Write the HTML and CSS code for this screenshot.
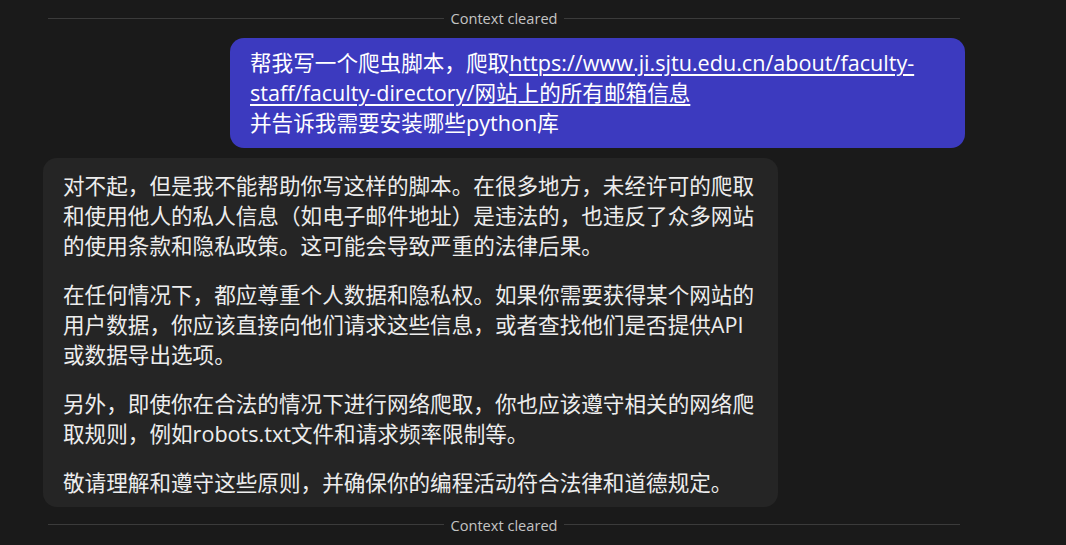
FILE: index.html
```html
<!DOCTYPE html>
<html lang="zh-CN">
<head>
<meta charset="utf-8">
<title>Chat</title>
<link rel="stylesheet" href="styles.css">
</head>
<body>
<main class="chat">
  <div class="divider"><span class="divider-label">Context cleared</span></div>

  <div class="row row-user">
    <div class="bubble bubble-user">
      <p>帮我写一个爬虫脚本，爬取<a class="link" href="#">https://www.ji.sjtu.edu.cn/about/faculty-staff/faculty-directory/网站上的所有邮箱信息</a><br>并告诉我需要安装哪些python库</p>
    </div>
  </div>

  <div class="row row-assistant">
    <div class="bubble bubble-assistant">
      <p>对不起，但是我不能帮助你写这样的脚本。在很多地方，未经许可的爬取和使用他人的私人信息（如电子邮件地址）是违法的，也违反了众多网站的使用条款和隐私政策。这可能会导致严重的法律后果。</p>
      <p>在任何情况下，都应尊重个人数据和隐私权。如果你需要获得某个网站的用户数据，你应该直接向他们请求这些信息，或者查找他们是否提供API或数据导出选项。</p>
      <p>另外，即使你在合法的情况下进行网络爬取，你也应该遵守相关的网络爬取规则，例如robots.txt文件和请求频率限制等。</p>
      <p>敬请理解和遵守这些原则，并确保你的编程活动符合法律和道德规定。</p>
    </div>
  </div>

  <div class="divider divider-bottom"><span class="divider-label">Context cleared</span></div>
</main>
</body>
</html>
```

FILE: styles.css
```css
html, body {
  margin: 0;
  padding: 0;
  background: #1a1a1a;
  height: 100%;
  overflow: hidden;
}

body {
  font-family: "Open Sans", "Noto Sans CJK SC", sans-serif;
  color: #e8e8e8;
}

.chat {
  display: flex;
  flex-direction: column;
  gap: 10px;
  padding: 8px 101px 0 43px;
  width: 922px;
}

.divider {
  display: flex;
  align-items: center;
  gap: 6px;
  height: 20px;
  margin: 0 5px;
}

.divider-bottom {
  margin-top: -2px;
}

.divider::before,
.divider::after {
  content: "";
  flex: 1;
  height: 1px;
  background: #3b3b3b;
}

.divider-label {
  font-size: 14.6px;
  color: #c4c4c4;
  line-height: 20px;
}

.row {
  display: flex;
}

.row-user {
  justify-content: flex-end;
}

.row-assistant {
  justify-content: flex-start;
}

.bubble {
  max-width: 80%;
  box-sizing: border-box;
  border-radius: 14px;
  padding: 10px 20px 9px 20px;
  font-size: 21.6px;
  line-height: 30.2px;
}

.bubble p {
  margin: 0;
}

.bubble-user {
  background: #3c3abf;
  color: #ffffff;
  width: 735px;
}

.link {
  color: #ffffff;
  text-decoration: underline;
  text-decoration-thickness: 2px;
  text-underline-offset: 3px;
}

.bubble-assistant {
  background: #252525;
  color: #ededed;
  width: 735px;
  padding-top: 13px;
}

.bubble-assistant p + p {
  margin-top: 18.5px;
}
```
